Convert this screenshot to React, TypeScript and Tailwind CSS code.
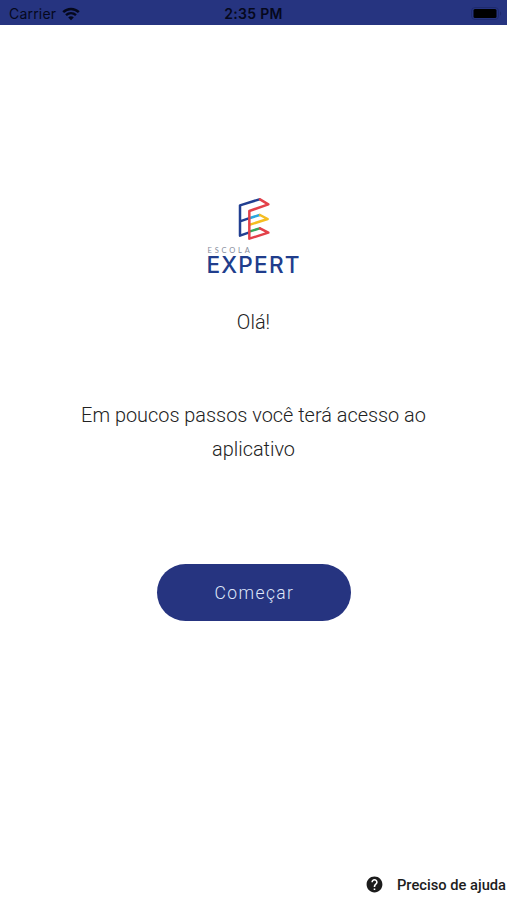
import { MdHelp } from 'react-icons/md'

function StatusBar() {
    return (
        <div className="grid h-[25px] w-full grid-cols-3 items-center bg-[#263480] pt-[2px] font-['Inter','Liberation_Sans',sans-serif] text-[#05081c]">
            <div className="flex items-center gap-[6px] pl-[9px]">
                <span className="text-[14px] leading-none tracking-[0.2px]">Carrier</span>
                <svg width="18" height="14" viewBox="0 0 18 14" fill="none" stroke="currentColor">
                    <path d="M1.2 5.2C5.6.8 12.4.8 16.8 5.2" strokeWidth="2.5" />
                    <path d="M4 8.2c2.9-2.7 7.1-2.7 10 0" strokeWidth="2.4" />
                    <path d="M9 13.2 6.2 10.4c1.6-1.4 4-1.4 5.6 0Z" fill="currentColor" stroke="none" />
                </svg>
            </div>
            <span className="text-center text-[14px] font-semibold leading-none tracking-[0.3px]">2:35 PM</span>
            <div className="flex justify-end pr-[5px]">
                <svg width="31" height="14" viewBox="0 0 31 14">
                    <rect x="0.5" y="0.5" width="27" height="12" rx="3.5" fill="none" stroke="#1e2a6e" />
                    <rect x="2.5" y="2" width="23" height="9" rx="1.5" fill="#000" />
                    <path d="M29 4.5c1.6.6 1.6 3.4 0 4Z" fill="#1e2a6e" />
                </svg>
            </div>
        </div>
    )
}

function Logo() {
    return (
        <div className="flex w-[94px] flex-col">
            <svg className="ml-[23px]" width="48" height="48" viewBox="0 0 144 144" fill="none" strokeWidth="7.5" strokeLinejoin="round" strokeLinecap="round">
                <path d="M88 22 30 40v91l26-9M30 88l26-9" stroke="#213f91" />
                <path d="m60 78 29-9" stroke="#2aa7df" />
                <path d="m90 69 23 12-53 17" stroke="#f5bd20" />
                <path d="m60 118 29-9" stroke="#35a75b" />
                <path d="m90 22 25 15-57 20v83l57-18-25-13" stroke="#e34149" />
            </svg>
            <span className="mt-[7px] whitespace-nowrap pl-px font-['Lato',sans-serif] text-[7.5px] leading-[8px] tracking-[2.8px] text-[#858c9c]">ESCOLA</span>
            <span className="mt-px whitespace-nowrap font-['Inter',sans-serif] text-[22.6px] font-medium leading-[18px] tracking-[1.2px] text-[#203d8c]">EXPERT</span>
        </div>
    )
}

function App() {
    return (
        <div className="flex h-[900px] w-full flex-col items-center overflow-hidden bg-white font-['Roboto',sans-serif]">
            <StatusBar />

            <div className="mt-[167px]">
                <Logo />
            </div>

            <p className="mt-[31px] text-[20px] font-light leading-[34px] text-[#222]">Olá!</p>
            <p className="mt-[60px] w-[380px] text-center text-[19.9px] font-light leading-[34px] text-[#222]">
                Em poucos passos você terá acesso ao aplicativo
            </p>

            <button className="mt-[97px] h-[57px] w-[194px] rounded-full bg-[#263480] pl-[2px] pt-px text-[17.5px] font-light tracking-[1.4px] text-[#dfe6fa]">
                Começar
            </button>

            <a className="mt-auto mb-[5px] flex items-center gap-[13px] self-end whitespace-nowrap pr-px text-[14.7px] font-medium leading-[20px] text-[#1c1c1c]">
                <MdHelp className="-mt-[2px]" size={19} />
                Preciso de ajuda
            </a>
        </div>
    )
}

export default App
